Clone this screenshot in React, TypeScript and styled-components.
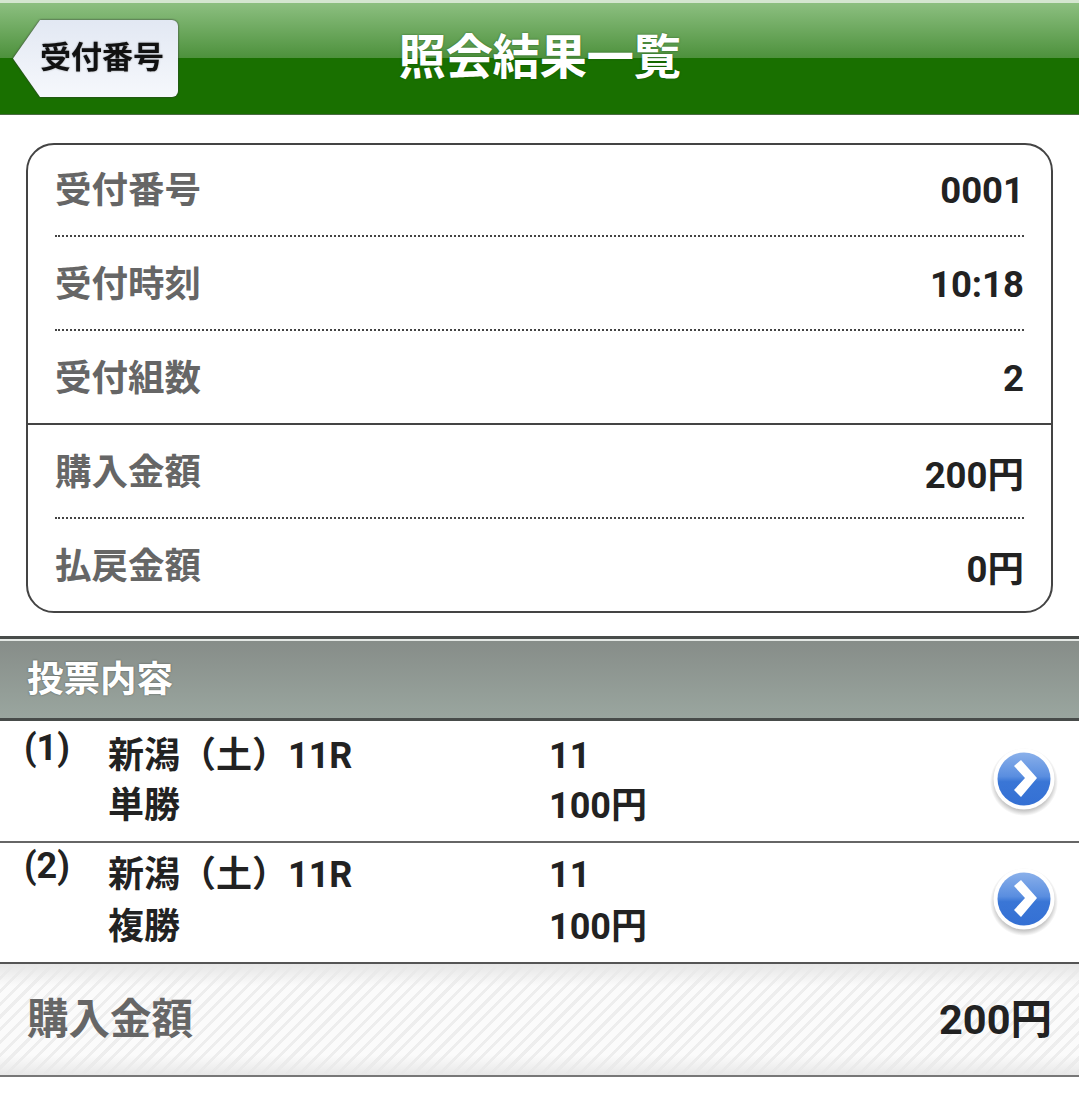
import React from "react";
import styled, { createGlobalStyle } from "styled-components";

const fontStack = `Roboto, "Noto Sans CJK JP", sans-serif`;

const GlobalStyle = createGlobalStyle`
    html, body {
        margin: 0;
        padding: 0;
        background: #fff;
        font-family: ${fontStack};
    }
`;

const summaryRows = [
    [
        { label: "受付番号", value: "0001" },
        { label: "受付時刻", value: "10:18" },
        { label: "受付組数", value: "2" },
    ],
    [
        { label: "購入金額", value: "200円" },
        { label: "払戻金額", value: "0円" },
    ],
];

const votes = [
    { no: "(1)", race: "新潟（土）11R", type: "単勝", horse: "11", amount: "100円" },
    { no: "(2)", race: "新潟（土）11R", type: "複勝", horse: "11", amount: "100円" },
];

const ArrowIcon = ({ id }: { id: string }) => (
    <svg width="68" height="72" viewBox="0 0 68 72">
        <defs>
            <linearGradient id={id} x1="0" y1="0" x2="0" y2="1">
                <stop offset="0" stopColor="#8ab0ea" />
                <stop offset="0.45" stopColor="#5a8ee0" />
                <stop offset="0.55" stopColor="#3a76d6" />
                <stop offset="1" stopColor="#3470d4" />
            </linearGradient>
            <radialGradient id={`${id}-shadow`} cx="0.5" cy="0.5" r="0.5">
                <stop offset="0.75" stopColor="#555" stopOpacity="0.5" />
                <stop offset="1" stopColor="#555" stopOpacity="0" />
            </radialGradient>
        </defs>
        <circle cx="34" cy="36" r="34" fill={`url(#${id}-shadow)`} />
        <circle cx="34" cy="33" r="30.5" fill="#fff" />
        <circle cx="34" cy="33" r="26.5" fill={`url(#${id})`} />
        <path d="M24 20 L31 14 L47 32 L31 51 L24 44 L35 32 Z" fill="#fff" />
    </svg>
);

const App: React.FC = () => (
    <Page>
        <GlobalStyle />
        <Header>
            <BackWrap>
                <BackButton>受付番号</BackButton>
            </BackWrap>
            <Title>照会結果一覧</Title>
        </Header>

        <Card>
            {summaryRows.map((group, groupIndex) => (
                <CardGroup key={groupIndex} $first={groupIndex === 0}>
                    {group.map((row, rowIndex) => (
                        <CardRow key={row.label} $dotted={rowIndex < group.length - 1}>
                            <CardLabel>{row.label}</CardLabel>
                            <CardValue>{row.value}</CardValue>
                        </CardRow>
                    ))}
                </CardGroup>
            ))}
        </Card>

        <SectionHeader>
            <SectionTitle>投票内容</SectionTitle>
        </SectionHeader>

        {votes.map((vote, index) => (
            <VoteRow key={vote.no} $last={index === votes.length - 1}>
                <VoteNo>{vote.no}</VoteNo>
                <VoteColumn $last={index === votes.length - 1}>
                    <div>{vote.race}</div>
                    <div>{vote.type}</div>
                </VoteColumn>
                <VoteColumn $last={index === votes.length - 1}>
                    <div>{vote.horse}</div>
                    <div>{vote.amount}</div>
                </VoteColumn>
                <VoteArrow>
                    <ArrowIcon id={`arrow-${index}`} />
                </VoteArrow>
            </VoteRow>
        ))}

        <Total>
            <TotalLabel>購入金額</TotalLabel>
            <TotalValue>200円</TotalValue>
        </Total>
    </Page>
);

const Page = styled.div`
    width: 1079px;
    height: 1098px;
    overflow: hidden;
    background: #fff;
`;

const Header = styled.header`
    position: relative;
    display: flex;
    align-items: center;
    justify-content: center;
    height: 115px;
    box-sizing: border-box;
    border-top: 3px solid #d4e6d0;
    border-bottom: 1px solid #4a6b42;
    background: linear-gradient(
        to bottom,
        #8cbf80 0,
        #4d913c 55px,
        #197000 55px,
        #197000 100%
    );
`;

const BackWrap = styled.div`
    position: absolute;
    left: 13px;
    top: 17px;
    filter: drop-shadow(0 0 1px #333);
`;

const BackButton = styled.div`
    width: 165px;
    height: 77px;
    box-sizing: border-box;
    padding: 0 0 9px 27px;
    display: flex;
    align-items: center;
    border-radius: 0 6px 6px 0;
    clip-path: polygon(27px 0, 100% 0, 100% 100%, 27px 100%, 0 50%);
    background: linear-gradient(to bottom, #e2e8f3, #f6f8fc);
    color: #111;
    font-size: 31px;
    font-weight: 700;
    white-space: nowrap;
    text-shadow: 0 0 2px rgba(0, 0, 0, 0.4);
`;

const Title = styled.h1`
    margin: -10px 0 0;
    color: #fff;
    font-size: 47.5px;
    font-weight: 700;
    letter-spacing: -0.5px;
    text-shadow: 0 0 2px rgba(0, 60, 0, 0.6);
`;

const Card = styled.section`
    box-sizing: border-box;
    height: 470px;
    margin: 28px 26px 0;
    border: 2px solid #444;
    border-radius: 28px;
    overflow: hidden;
`;

const CardGroup = styled.div<{ $first: boolean }>`
    ${(p) => (p.$first ? "margin-top: -2px;" : "border-top: 2px solid #444;")}
`;

const CardRow = styled.div<{ $dotted: boolean }>`
    display: flex;
    align-items: center;
    justify-content: space-between;
    height: 92px;
    margin: 0 27px;
    border-bottom: 2px ${(p) => (p.$dotted ? "dotted #444" : "none transparent")};
`;

const CardLabel = styled.span`
    margin-bottom: 4px;
    color: #666;
    font-size: 36.5px;
    font-weight: 700;
`;

const CardValue = styled.span`
    margin-top: 2px;
    color: #222;
    font-size: 36.5px;
    font-weight: 700;
`;

const SectionHeader = styled.div`
    display: flex;
    align-items: center;
    box-sizing: border-box;
    height: 85px;
    margin-top: 23px;
    padding: 0 0 4px 27px;
    border-top: 3px solid #484c4a;
    border-bottom: 3px solid #484c4a;
    box-shadow: inset 0 2px 0 #e4e8e5;
    background: linear-gradient(to bottom, #868c88, #9aa69f);
`;

const SectionTitle = styled.h2`
    margin: 0;
    color: #fff;
    font-size: 36.5px;
    font-weight: 700;
    text-shadow: 0 0 2px rgba(0, 0, 0, 0.45);
`;

const VoteRow = styled.div<{ $last: boolean }>`
    display: grid;
    grid-template-columns: 84px 441px 1fr 68px;
    box-sizing: border-box;
    height: ${(p) => (p.$last ? "119px" : "122px")};
    padding: ${(p) => (p.$last ? "6px" : "10px")} 21px 0 24px;
    border-bottom: ${(p) => (p.$last ? "none" : "2px solid #666")};
    color: #222;
    font-size: 36px;
    font-weight: 700;
`;

const VoteNo = styled.div`
    line-height: 34px;
`;

const VoteColumn = styled.div<{ $last: boolean }>`
    line-height: ${(p) => (p.$last ? "52px" : "50px")};
`;

const VoteArrow = styled.div`
    align-self: center;
    display: flex;
    margin-top: -8px;
`;

const Total = styled.div`
    display: flex;
    align-items: center;
    justify-content: space-between;
    box-sizing: border-box;
    height: 115px;
    padding: 0 27px 8px;
    border-top: 2px solid #555;
    border-bottom: 2px solid #777;
    background:
        repeating-linear-gradient(
            135deg,
            rgba(232, 232, 232, 0.7) 0,
            rgba(232, 232, 232, 0.7) 3px,
            transparent 3px,
            transparent 9px
        ),
        linear-gradient(to bottom, #e6e6e6, #fbfbfb 20%, #fbfbfb 82%, #e8e8e8);
`;

const TotalLabel = styled.span`
    color: #666;
    font-size: 41.5px;
    font-weight: 700;
`;

const TotalValue = styled.span`
    color: #222;
    font-size: 41.5px;
    font-weight: 700;
`;

export default App;
